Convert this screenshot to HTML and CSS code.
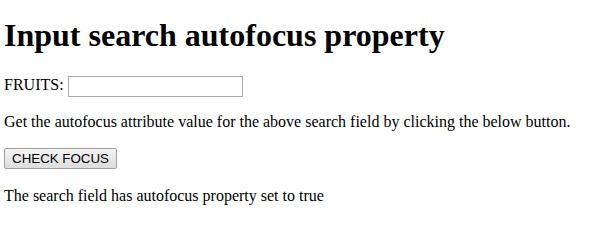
FILE: index.html
```html
<!DOCTYPE html>
<html lang="en">
<head>
    <meta charset="UTF-8">
    <title>Input search autofocus property</title>
    <link rel="stylesheet" href="styles.css">
</head>
<body>
    <h1>Input search autofocus property</h1>
    <form>
        FRUITS: <input type="search" id="SEARCH1" autofocus>
    </form>
    <p>Get the autofocus attribute value for the above search field by clicking the below button.</p>
    <button type="button" onclick="checkFocus()">CHECK FOCUS</button>
    <p id="Sample">The search field has autofocus property set to true</p>
    <script>
        function checkFocus() {
            var s = document.getElementById("SEARCH1").autofocus;
            document.getElementById("Sample").innerHTML = "The search field has autofocus property set to " + s;
        }
    </script>
</body>
</html>
```

FILE: styles.css
```css
body {
    font-family: "Liberation Serif", "Times New Roman", serif;
    font-size: 16px;
    margin: 0 4px;
    color: #000;
    background: #fff;
}

h1 {
    font-size: 32px;
    margin: 17px 0 22px;
}

form {
    margin: 0;
}

input[type="search"] {
    -webkit-appearance: none;
    appearance: none;
    box-sizing: border-box;
    width: 175px;
    height: 21px;
    border: 1px solid #a9a9a9;
    padding: 1px 2px;
    font-size: 13px;
    margin: 0;
    vertical-align: middle;
    outline: none;
}

p {
    margin: 16px 0;
}

button {
    font-family: "Liberation Sans", Arial, sans-serif;
    font-size: 13.3px;
    color: #000;
    background: linear-gradient(#f4f4f4, #dddddd);
    border: 1px solid #a0a0a0;
    border-radius: 2px;
    box-sizing: border-box;
    width: 113px;
    height: 21px;
    padding: 0 6px;
    margin: 1px 0 0;
}

#Sample {
    margin-top: 18px;
}
```
